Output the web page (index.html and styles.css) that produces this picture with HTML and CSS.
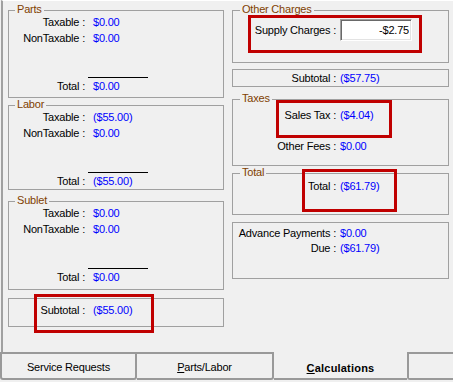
FILE: index.html
```html
<!DOCTYPE html>
<html>
<head>
<meta charset="utf-8">
<link rel="stylesheet" href="styles.css">
</head>
<body>
<div class="window">
  <div class="panel">
    <div class="col col-left">
      <div class="group g-parts">
        <div class="legend">Parts</div>
        <div class="row"><span class="lbl">Taxable :</span><span class="val">$0.00</span></div>
        <div class="row"><span class="lbl">NonTaxable :</span><span class="val">$0.00</span></div>
        <div class="rule"></div>
        <div class="row"><span class="lbl">Total :</span><span class="val">$0.00</span></div>
      </div>
      <div class="group g-labor">
        <div class="legend">Labor</div>
        <div class="row"><span class="lbl">Taxable :</span><span class="val">($55.00)</span></div>
        <div class="row"><span class="lbl">NonTaxable :</span><span class="val">$0.00</span></div>
        <div class="rule"></div>
        <div class="row"><span class="lbl">Total :</span><span class="val">($55.00)</span></div>
      </div>
      <div class="group g-sublet">
        <div class="legend">Sublet</div>
        <div class="row"><span class="lbl">Taxable :</span><span class="val">$0.00</span></div>
        <div class="row"><span class="lbl">NonTaxable :</span><span class="val">$0.00</span></div>
        <div class="rule"></div>
        <div class="row"><span class="lbl">Total :</span><span class="val">$0.00</span></div>
      </div>
      <div class="box b-subleft">
        <div class="row hl hl-sub"><span class="lbl">Subtotal :</span><span class="val">($55.00)</span></div>
      </div>
    </div>
    <div class="col col-right">
      <div class="group g-other">
        <div class="legend">Other Charges</div>
        <div class="row supply hl hl-supply"><span class="lbl">Supply Charges :</span><input class="field" type="text" value="-$2.75" readonly></div>
      </div>
      <div class="box b-subright">
        <div class="row"><span class="lbl">Subtotal :</span><span class="val">($57.75)</span></div>
      </div>
      <div class="group g-taxes">
        <div class="legend">Taxes</div>
        <div class="row r-sales hl hl-tax"><span class="lbl">Sales Tax :</span><span class="val">($4.04)</span></div>
        <div class="row r-fees"><span class="lbl">Other Fees :</span><span class="val">$0.00</span></div>
      </div>
      <div class="group g-total">
        <div class="legend">Total</div>
        <div class="row r-total hl hl-total"><span class="lbl">Total :</span><span class="val">($61.79)</span></div>
      </div>
      <div class="box b-advance">
        <div class="row"><span class="lbl">Advance Payments :</span><span class="val">$0.00</span></div>
        <div class="row"><span class="lbl">Due :</span><span class="val">($61.79)</span></div>
      </div>
    </div>
  </div>
  <div class="tabs">
    <div class="tab tab-first">Service Requests</div>
    <div class="tab tab-second"><u>P</u>arts/Labor</div>
    <div class="tab tab-active"><u>C</u>alculations</div>
    <div class="tab tab-last"></div>
  </div>
</div>
</body>
</html>
```
FILE: styles.css
```css
* { box-sizing: border-box; }

body {
  margin: 0;
  background: #f0f0f0;
  font-family: "Liberation Sans", Arial, sans-serif;
  font-size: 11px;
  letter-spacing: -0.2px;
  color: #000;
}

.window {
  width: 453px;
  height: 382px;
  overflow: hidden;
  display: flex;
  flex-direction: column;
}

.panel {
  height: 352px;
  flex: none;
  margin-left: 1px;
  border-left: 2px solid #a0a0a0;
  border-top: 1px solid #fff;
  padding: 9px 0 0 5px;
  display: flex;
  gap: 8px;
}

.col {
  display: flex;
  flex-direction: column;
}
.col-left { width: 216px; }
.col-right { width: 217px; }

.group, .box {
  border: 1px solid #a0a0a0;
  display: flex;
  flex-direction: column;
  flex: none;
}

.legend {
  align-self: flex-start;
  margin: -8px 0 -2px 6px;
  padding: 0 2px;
  line-height: 13px;
  background: #f0f0f0;
  color: #804000;
}
.col-right .legend { margin-left: 7px; }

.row {
  display: flex;
  line-height: 16px;
  white-space: nowrap;
  flex: none;
}
.lbl {
  width: 76px;
  text-align: right;
  flex: none;
}
.val {
  margin-left: 8px;
  color: #0000ff;
}
.col-right .lbl { width: 103px; }
.col-right .val { margin-left: 4px; }

.rule {
  margin: 31px 0 0 79px;
  width: 60px;
  height: 1px;
  background: #000;
  flex: none;
}

/* left column sizes */
.g-parts { height: 88px; }
.g-labor { height: 85px; margin-top: 7px; }
.g-sublet { height: 89px; margin-top: 11px; }
.b-subleft { height: 29px; margin-top: 8px; padding-top: 3px; }

/* right column sizes */
.g-other { height: 53px; }
.supply {
  margin-top: 5px;
  height: 22px;
  align-items: center;
}
.field {
  width: 72px;
  height: 22px;
  margin: 0 0 0 4px;
  padding: 0 2px 0 0;
  font: inherit;
  letter-spacing: inherit;
  color: #000;
  text-align: right;
  background: #fff;
  border-top: 1px solid #a0a0a0;
  border-left: 1px solid #a0a0a0;
  border-bottom: 1px solid #fff;
  border-right: 1px solid #fff;
  box-shadow: inset 1px 1px 0 #696969, inset -1px -1px 0 #e3e3e3;
  outline: none;
}

.b-subright { height: 18px; margin-top: 6px; }
.g-taxes { height: 67px; margin-top: 12px; }
.r-sales { margin-top: 4px; }
.r-fees { margin-top: 15px; }
.g-total { height: 42px; margin-top: 7px; }
.r-total { margin-top: 1px; }
.b-advance { height: 57px; margin-top: 7px; padding-top: 3px; }
.b-advance .row { line-height: 15px; }

/* red annotation boxes */
.hl { position: relative; }
.hl::after {
  content: "";
  position: absolute;
  border: 3px solid #c00000;
  pointer-events: none;
}
.hl-sub::after { left: 25px; top: -8px; width: 114px; height: 33px; }
.hl-supply::after { left: 15px; top: -4px; width: 168px; height: 32px; }
.hl-tax::after { left: 43px; top: -7px; width: 110px; height: 32px; }
.hl-total::after { left: 69px; top: -9px; width: 89px; height: 37px; }

/* tabs */
.tabs {
  height: 30px;
  flex: none;
  display: flex;
  align-items: flex-start;
}
.tab {
  height: 28px;
  flex: none;
  border-top: 2px solid #999;
  border-bottom: 2px solid #999;
  text-align: center;
  line-height: 16px;
  padding-top: 5px;
  white-space: nowrap;
}
.tab-first {
  width: 137px;
  border-left: 2px solid #999;
  border-right: 2px solid #999;
  border-radius: 0 0 3px 3px;
}
.tab-second {
  width: 137px;
  border-right: 2px solid #999;
  border-radius: 0 0 3px 0;
}
.tab-active {
  width: 133px;
  border-top: 0;
  padding-top: 8px;
  font-weight: bold;
  letter-spacing: 0.2px;
}
.tab-last {
  flex: 1;
  border-left: 2px solid #999;
  border-radius: 0 0 0 3px;
}
```
